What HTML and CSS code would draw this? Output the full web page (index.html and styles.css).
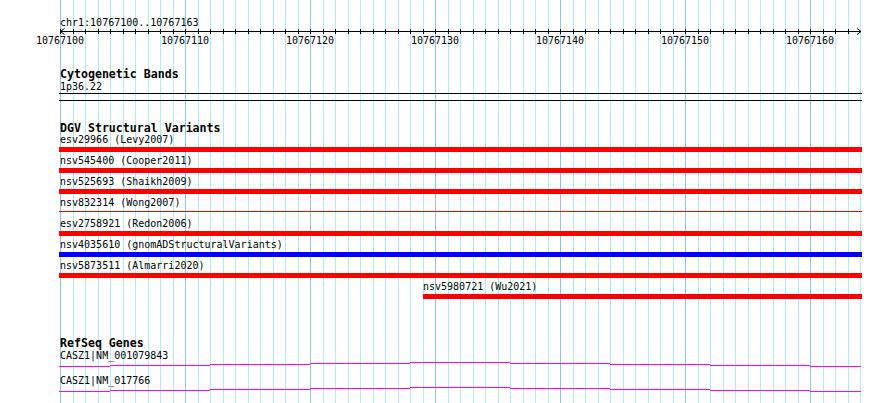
FILE: index.html
```html
<!DOCTYPE html>
<html>
<head>
<meta charset="utf-8">
<link rel="stylesheet" href="styles.css">
</head>
<body>
<svg class="grid" width="890" height="403" viewBox="0 0 890 403">
  <path class="grid-minor" d="M73.5 0V403M85.5 0V403M98.5 0V403M110.5 0V403M123.5 0V403M135.5 0V403M148.5 0V403M160.5 0V403M173.5 0V403M198.5 0V403M210.5 0V403M223.5 0V403M235.5 0V403M248.5 0V403M260.5 0V403M273.5 0V403M285.5 0V403M298.5 0V403M323.5 0V403M335.5 0V403M348.5 0V403M360.5 0V403M373.5 0V403M385.5 0V403M398.5 0V403M410.5 0V403M423.5 0V403M448.5 0V403M460.5 0V403M473.5 0V403M485.5 0V403M498.5 0V403M510.5 0V403M523.5 0V403M535.5 0V403M548.5 0V403M573.5 0V403M585.5 0V403M598.5 0V403M610.5 0V403M623.5 0V403M635.5 0V403M648.5 0V403M660.5 0V403M673.5 0V403M698.5 0V403M710.5 0V403M723.5 0V403M735.5 0V403M748.5 0V403M760.5 0V403M773.5 0V403M785.5 0V403M798.5 0V403M823.5 0V403M835.5 0V403M848.5 0V403M860.5 0V403"/>
  <path class="grid-major" d="M60.5 0V403M185.5 0V403M310.5 0V403M435.5 0V403M560.5 0V403M685.5 0V403M810.5 0V403"/>
</svg>

<div class="view">
  <div class="ruler">
    <div class="chr-label">chr1:10767100..10767163</div>
    <svg class="axis" width="890" height="7" viewBox="0 0 890 7">
      <path class="axis-line" d="M60 3.5H861"/>
      <path class="axis-line" d="M60.5 1v5M73.5 1v5M85.5 1v5M98.5 1v5M110.5 1v5M123.5 1v5M135.5 1v5M148.5 1v5M160.5 1v5M173.5 1v5M185.5 1v5M198.5 1v5M210.5 1v5M223.5 1v5M235.5 1v5M248.5 1v5M260.5 1v5M273.5 1v5M285.5 1v5M298.5 1v5M310.5 1v5M323.5 1v5M335.5 1v5M348.5 1v5M360.5 1v5M373.5 1v5M385.5 1v5M398.5 1v5M410.5 1v5M423.5 1v5M435.5 1v5M448.5 1v5M460.5 1v5M473.5 1v5M485.5 1v5M498.5 1v5M510.5 1v5M523.5 1v5M535.5 1v5M548.5 1v5M560.5 1v5M573.5 1v5M585.5 1v5M598.5 1v5M610.5 1v5M623.5 1v5M635.5 1v5M648.5 1v5M660.5 1v5M673.5 1v5M685.5 1v5M698.5 1v5M710.5 1v5M723.5 1v5M735.5 1v5M748.5 1v5M760.5 1v5M773.5 1v5M785.5 1v5M798.5 1v5M810.5 1v5M823.5 1v5M835.5 1v5M848.5 1v5"/>
      <path class="axis-arrow" d="M64.5 0.5L60.5 3.5L64.5 6.5M857 0.5L861 3.5L857 6.5"/>
    </svg>
    <div class="tick-labels">
      <span class="tick">10767100</span>
      <span class="tick">10767110</span>
      <span class="tick">10767120</span>
      <span class="tick">10767130</span>
      <span class="tick">10767140</span>
      <span class="tick">10767150</span>
      <span class="tick">10767160</span>
    </div>
  </div>

  <section class="track track-cyto">
    <h2 class="track-title">Cytogenetic Bands</h2>
    <div class="feature-label">1p36.22</div>
    <div class="cyto-band"></div>
  </section>

  <section class="track track-dgv">
    <h2 class="track-title">DGV Structural Variants</h2>
    <div class="sv-row">
      <div class="feature-label">esv29966 (Levy2007)</div>
      <div class="sv-bar red"></div>
    </div>
    <div class="sv-row">
      <div class="feature-label">nsv545400 (Cooper2011)</div>
      <div class="sv-bar red"></div>
    </div>
    <div class="sv-row">
      <div class="feature-label">nsv525693 (Shaikh2009)</div>
      <div class="sv-bar red"></div>
    </div>
    <div class="sv-row">
      <div class="feature-label">nsv832314 (Wong2007)</div>
      <div class="sv-bar red thin"></div>
    </div>
    <div class="sv-row">
      <div class="feature-label">esv2758921 (Redon2006)</div>
      <div class="sv-bar red"></div>
    </div>
    <div class="sv-row">
      <div class="feature-label">nsv4035610 (gnomADStructuralVariants)</div>
      <div class="sv-bar blue"></div>
    </div>
    <div class="sv-row">
      <div class="feature-label">nsv5873511 (Almarri2020)</div>
      <div class="sv-bar red"></div>
    </div>
    <div class="sv-row partial">
      <div class="feature-label">nsv5980721 (Wu2021)</div>
      <div class="sv-bar red"></div>
    </div>
  </section>

  <section class="track track-genes">
    <h2 class="track-title">RefSeq Genes</h2>
    <div class="gene-row">
      <div class="feature-label">CASZ1|NM_001079843</div>
      <svg class="intron" width="890" height="14" viewBox="0 0 890 14">
        <path d="M59 5.5H110M110 4.5H210M210 3.5H310M310 2.5H410M410 1.5H510M510 2.5H610M610 3.5H710M710 4.5H810M810 5.5H861"/>
      </svg>
    </div>
    <div class="gene-row">
      <div class="feature-label">CASZ1|NM_017766</div>
      <svg class="intron" width="890" height="14" viewBox="0 0 890 14">
        <path d="M59 5.5H110M110 4.5H210M210 3.5H310M310 2.5H410M410 1.5H510M510 2.5H610M610 3.5H710M710 4.5H810M810 5.5H861"/>
      </svg>
    </div>
  </section>
</div>
</body>
</html>
```

FILE: styles.css
```css
html {
  margin: 0;
  padding: 0;
  background: #ffffff;
}

body {
  margin: 0;
  padding: 0;
  position: relative;
  width: 890px;
  height: 403px;
  overflow: hidden;
  font-family: "DejaVu Sans Mono", "Liberation Mono", monospace;
  font-size: 10px;
  line-height: 11px;
  color: #000000;
}

.grid {
  position: absolute;
  left: 0;
  top: 0;
  z-index: 0;
  shape-rendering: crispEdges;
}

.grid-minor {
  stroke: #b0ebf2;
  stroke-width: 1;
  fill: none;
}

.grid-major {
  stroke: #8cc6e6;
  stroke-width: 1;
  fill: none;
}

.view {
  position: relative;
  z-index: 1;
  padding-top: 17px;
}

.chr-label {
  margin-left: 60px;
  height: 11px;
  white-space: nowrap;
}

.axis {
  display: block;
}

.axis-line {
  stroke: #000000;
  stroke-width: 1;
  fill: none;
  shape-rendering: crispEdges;
}

.axis-arrow {
  stroke: #000000;
  stroke-width: 1;
  fill: none;
}

.tick-labels {
  display: flex;
  margin-left: -2.5px;
  height: 11px;
}

.tick {
  flex: 0 0 125px;
  width: 125px;
  text-align: center;
  white-space: nowrap;
}

.track-title {
  margin: 0 0 0 60px;
  font-size: 11.6px;
  line-height: 12px;
  font-weight: bold;
  white-space: nowrap;
}

.feature-label {
  margin-left: 60px;
  height: 11px;
  white-space: nowrap;
}

.track-cyto {
  margin-top: 22px;
}

.track-cyto .feature-label {
  margin-top: 1px;
}

.cyto-band {
  box-sizing: border-box;
  margin: 1px 0 0 59px;
  width: 803px;
  height: 8px;
  border-top: 1px solid #000000;
  border-bottom: 1px solid #000000;
}

.track-dgv {
  margin-top: 21px;
}

.sv-row {
  height: 21px;
}

.sv-bar {
  margin: 2px 0 3px 59px;
  width: 803px;
  height: 5px;
}

.sv-bar.thin {
  margin-top: 3px;
  height: 1px;
}

.sv-bar.red {
  background: #ff0000;
}

.sv-bar.blue {
  background: #0000ff;
}

.sv-row.partial .feature-label {
  margin-left: 423px;
}

.sv-row.partial .sv-bar {
  margin-left: 423px;
  width: 439px;
}

.track-genes {
  margin-top: 35px;
}

.track-genes .track-title {
  margin-bottom: 1px;
}

.gene-row {
  height: 25px;
}

.intron {
  display: block;
  shape-rendering: crispEdges;
}

.intron path {
  stroke: #ff00ff;
  stroke-width: 1;
  fill: none;
}
```
